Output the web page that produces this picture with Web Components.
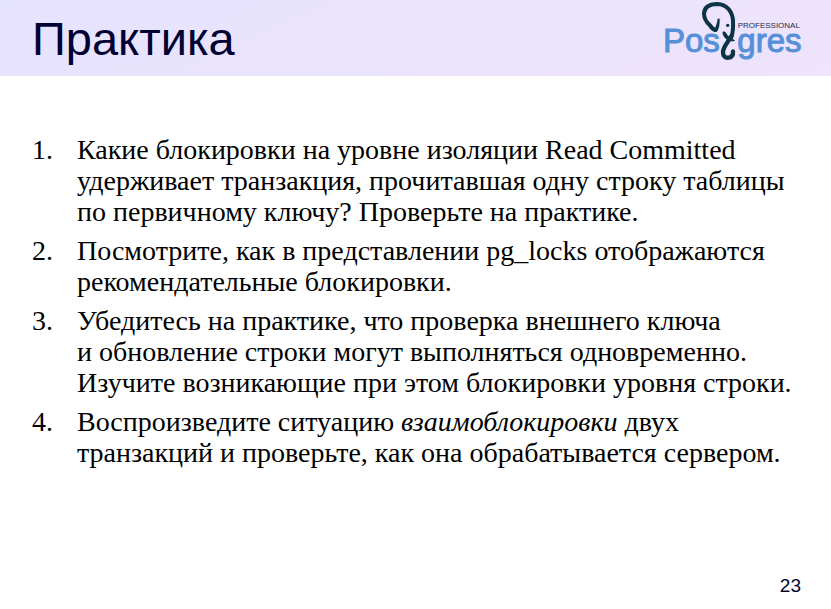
<!DOCTYPE html>
<html lang="ru">
<head>
<meta charset="utf-8">
<title>Практика</title>
<style>
html, body { margin: 0; min-height: 100%; background: #fff; }
</style>
</head>
<body>
<lecture-slide>
  <slide-header slot="header">Практика<brand-logo slot="logo"></brand-logo></slide-header>
  <task-list>
    <task-item>Какие блокировки на уровне изоляции Read Committed<br>удерживает транзакция, прочитавшая одну строку таблицы<br>по первичному ключу? Проверьте на практике.</task-item>
    <task-item>Посмотрите, как в представлении pg_locks отображаются<br>рекомендательные блокировки.</task-item>
    <task-item>Убедитесь на практике, что проверка внешнего ключа<br>и обновление строки могут выполняться одновременно.<br>Изучите возникающие при этом блокировки уровня строки.</task-item>
    <task-item>Воспроизведите ситуацию <em>взаимоблокировки</em> двух<br>транзакций и проверьте, как она обрабатывается сервером.</task-item>
  </task-list>
  <page-number slot="footer">23</page-number>
</lecture-slide>
<script>
function define(name, html, setup) {
  const template = document.createElement('template');
  template.innerHTML = html;
  customElements.define(name, class extends HTMLElement {
    connectedCallback() {
      if (this.shadowRoot) return;
      this.attachShadow({ mode: 'open' }).append(template.content.cloneNode(true));
      if (setup) setup(this);
    }
  });
}

define('brand-logo', `
<style>
  :host { display: block; }
  svg { display: block; width: 139px; height: 61px; }
  text { font-family: "Liberation Sans", Arial, sans-serif; }
  .word { font-size: 99px; fill: #5590d8; stroke: #5590d8; stroke-width: 3; }
  .label { font-size: 24px; fill: #1d2d48; }
  .trunk { fill: none; stroke: #0d3347; stroke-linecap: round; stroke-linejoin: round; }
</style>
<svg viewBox="27 0 417 183" role="img" aria-label="Postgres Professional">
  <text class="word" x="24" y="155">Pos</text>
  <text class="word" x="247" y="155">gres</text>
  <text class="label" x="248" y="84">PROFESSIONAL</text>
  <path class="trunk" stroke-width="12" d="M181 90C173 88 168 82 164 75C153 65 147 54 147 41C148 20 165 12 187 12C215 13 232 34 234 62C235 83 234 98 229 112"/>
  <path fill="#0d3347" d="M188 57C191 54 195 56 194 61C194 77 191 92 184 96C177 96 169 90 163 80L168 72C174 78 177 83 180 84C184 77 186 68 188 57Z"/>
  <path class="trunk" stroke-width="13" d="M229 108C222 124 204 138 204 157C204 169 211 174 220 173C231 172 235 166 234 154"/>
  <path fill="#0d3347" d="M203 96C207 93 211 95 214 100C218 108 227 115 240 121C238 126 225 124 217 120C208 114 201 103 203 96Z"/>
  <circle cx="218" cy="76" r="5" fill="#0d3347"/>
</svg>`);

define('slide-header', `
<style>
  :host { display: flex; justify-content: space-between; align-items: flex-start; height: 76px; padding: 0 28px 0 32px; box-sizing: border-box; background: linear-gradient(155deg, #e6e3fe, #efe3fd); }
  h1 { margin: 0; font: 400 47px/78px "Liberation Sans", Arial, sans-serif; color: #000033; }
</style>
<h1><slot></slot></h1><slot name="logo"></slot>`);

define('task-item', `
<style>
  :host { display: grid; grid-template-columns: 45px 1fr; }
</style>
<span class="number"></span><div><slot></slot></div>`, el => {
  el.setAttribute('role', 'listitem');
  el.shadowRoot.querySelector('.number').textContent = [...el.parentElement.children].indexOf(el) + 1 + '.';
});

define('task-list', `
<style>
  :host { display: grid; gap: 8px; font: 28px/31px "Liberation Serif", "Times New Roman", serif; color: #000; }
</style>
<slot></slot>`, el => el.setAttribute('role', 'list'));

define('page-number', `
<style>
  :host { display: block; text-align: right; font: 19px/22px "Liberation Sans", Arial, sans-serif; color: #000033; }
</style>
<slot></slot>`);

define('lecture-slide', `
<style>
  :host { display: flex; flex-direction: column; min-height: 100vh; background: #fff; }
  main { flex: 1; padding: 58px 32px 0; }
  footer { padding: 0 30px 12px; }
</style>
<slot name="header"></slot><main><slot></slot></main><footer><slot name="footer"></slot></footer>`);
</script>
</body>
</html>
